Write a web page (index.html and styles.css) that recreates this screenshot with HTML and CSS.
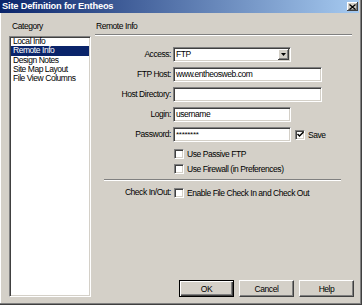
FILE: index.html
```html
<!DOCTYPE html>
<html>
<head>
<meta charset="utf-8">
<link rel="stylesheet" href="styles.css">
</head>
<body>
<div class="window">
  <div class="titlebar">
    <span class="title">Site Definition for Entheos</span>
    <span class="close"><svg width="7" height="6" viewBox="0 0 7 6"><path d="M0.5 0.5L6.5 5.5M6.5 0.5L0.5 5.5" stroke="#000" stroke-width="1.3"/></svg></span>
  </div>
  <div class="content">
    <div class="category">
      <div class="cat-label">Category</div>
      <div class="list">
        <ul class="items">
          <li>Local Info</li>
          <li class="sel">Remote Info</li>
          <li>Design Notes</li>
          <li>Site Map Layout</li>
          <li>File View Columns</li>
        </ul>
      </div>
    </div>
    <div class="panel">
      <div class="panel-head">Remote Info</div>
      <div class="head-rule"></div>
      <div class="form">
        <span class="lbl">Access:</span>
        <div class="field select w118"><span class="val">FTP</span><span class="drop"><svg width="5" height="3" viewBox="0 0 5 3"><path d="M0 0H5L2.5 3Z" fill="#000"/></svg></span></div>
        <span class="lbl">FTP Host:</span>
        <div class="field w149"><span class="val">www.entheosweb.com</span></div>
        <span class="lbl">Host Directory:</span>
        <div class="field w149"></div>
        <span class="lbl">Login:</span>
        <div class="field w118"><span class="val">username</span></div>
        <span class="lbl">Password:</span>
        <div class="pw-row">
          <div class="field w118"><span class="val pw">********</span></div>
          <span class="cb checked"><svg width="7" height="7" viewBox="0 0 7 7"><path d="M0.5 3L2.5 5L6.5 1" stroke="#000" stroke-width="1.5" fill="none"/></svg></span>
          <span class="cb-text">Save</span>
        </div>
      </div>
      <div class="checks">
        <div class="check-row"><span class="cb"></span><span class="cb-text">Use Passive FTP</span></div>
        <div class="check-row"><span class="cb"></span><span class="cb-text">Use Firewall (in Preferences)</span></div>
      </div>
      <div class="mid-rule"></div>
      <div class="checkin">
        <span class="lbl">Check In/Out:</span>
        <div class="check-row inline"><span class="cb"></span><span class="cb-text">Enable File Check In and Check Out</span></div>
      </div>
      <div class="buttons">
        <span class="btn default">OK</span>
        <span class="btn">Cancel</span>
        <span class="btn">Help</span>
      </div>
    </div>
  </div>
</div>
</body>
</html>
```
FILE: styles.css
```css
* { box-sizing: border-box; }
body {
  margin: 0;
  font-family: "Liberation Sans", Arial, sans-serif;
  font-size: 8.5px;
  letter-spacing: -0.45px;
  color: #000;
}
.window {
  width: 362px;
  height: 305px;
  background: #d4d0c8;
  display: flex;
  flex-direction: column;
  box-shadow: inset -1px -1px #404040, inset -2px -2px #808080, inset 1px 0 #ffffff;
}
.titlebar {
  height: 13px;
  margin-right: 3px;
  background: linear-gradient(to right, #0a246a, #a6caf0);
  display: flex;
  align-items: center;
  justify-content: space-between;
  padding: 0 1px 0 2px;
}
.title {
  color: #fff;
  font-weight: bold;
  font-size: 9.3px;
  letter-spacing: -0.2px;
  line-height: 13px;
}
.close {
  width: 11px;
  height: 9px;
  background: #d4d0c8;
  box-shadow: inset -1px -1px #404040, inset 1px 1px #ffffff, inset -2px -2px #808080;
  display: flex;
  align-items: center;
  justify-content: center;
}
.close svg { display: block; }
.content {
  flex: 1;
  display: flex;
  padding: 7px 8px 8px 9px;
}
.category {
  width: 82px;
  display: flex;
  flex-direction: column;
}
.cat-label {
  height: 16px;
  line-height: 12px;
  padding-left: 3px;
}
.list {
  flex: 1;
  background: #fff;
  border: 1px solid;
  border-color: #808080 #ffffff #ffffff #808080;
  box-shadow: inset 1px 1px #404040, inset -1px -1px #d4d0c8;
  padding: 0 1px;
  overflow: hidden;
}
.items {
  list-style: none;
  margin: 0;
  padding: 0;
}
.items li {
  line-height: 9.3px;
  height: 9.3px;
  padding-left: 2px;
  white-space: nowrap;
}
.items li.sel {
  background: #0a246a;
  color: #fff;
}
.panel {
  flex: 1;
  margin-left: 4px;
  display: flex;
  flex-direction: column;
}
.panel-head {
  height: 14px;
  line-height: 12px;
  padding-left: 1px;
}
.head-rule {
  height: 2px;
  border-top: 1px solid #808080;
  border-bottom: 1px solid #ffffff;
  margin-right: 2px;
}
.form {
  display: grid;
  grid-template-columns: 76px auto;
  column-gap: 2px;
  row-gap: 5px;
  margin-top: 11px;
  align-items: center;
}
.lbl {
  text-align: right;
  white-space: nowrap;
  line-height: 15px;
}
.field {
  height: 15px;
  background: #fff;
  border: 1px solid;
  border-color: #808080 #ffffff #ffffff #808080;
  box-shadow: inset 1px 1px #404040, inset -1px -1px #d4d0c8;
  display: flex;
  align-items: center;
  padding-left: 2px;
  overflow: hidden;
}
.w118 { width: 118px; }
.w149 { width: 149px; }
.val {
  flex: 1;
  white-space: nowrap;
  line-height: 13px;
}
.pw {
  font-size: 8px;
  letter-spacing: -0.3px;
  line-height: 11px;
}
.select .drop {
  width: 11px;
  align-self: stretch;
  margin: 1px 1px 1px 0;
  background: #d4d0c8;
  box-shadow: inset -1px -1px #404040, inset 1px 1px #ffffff, inset -2px -2px #808080;
  display: flex;
  align-items: center;
  justify-content: center;
}
.select .drop svg { display: block; }
.pw-row {
  display: flex;
  align-items: center;
}
.pw-row .cb { margin-left: 4px; }
.cb {
  width: 10px;
  height: 10px;
  flex: none;
  background: #fff;
  border: 1px solid;
  border-color: #808080 #ffffff #ffffff #808080;
  box-shadow: inset 1px 1px #404040, inset -1px -1px #d4d0c8;
  display: flex;
  align-items: center;
  justify-content: center;
}
.cb svg { display: block; }
.cb-text {
  margin-left: 3px;
  white-space: nowrap;
}
.checks {
  margin-top: 4px;
  padding-left: 79px;
}
.check-row {
  height: 15px;
  display: flex;
  align-items: center;
}
.mid-rule {
  height: 2px;
  width: 237px;
  margin: 3px 0 0 9px;
  border-top: 1px solid #808080;
  border-bottom: 1px solid #ffffff;
}
.checkin {
  margin-top: 4px;
  display: grid;
  grid-template-columns: 76px auto;
  column-gap: 3px;
  align-items: center;
}
.buttons {
  margin-top: auto;
  display: flex;
  justify-content: flex-end;
  gap: 5px;
}
.btn {
  width: 55px;
  height: 17px;
  background: #d4d0c8;
  border: 1px solid;
  border-color: #ffffff #404040 #404040 #ffffff;
  box-shadow: inset -1px -1px #808080;
  display: flex;
  align-items: center;
  justify-content: center;
}
.btn.default {
  border: 1px solid #000;
  box-shadow: inset 1px 1px #ffffff, inset -1px -1px #404040, inset -2px -2px #808080;
}
```
